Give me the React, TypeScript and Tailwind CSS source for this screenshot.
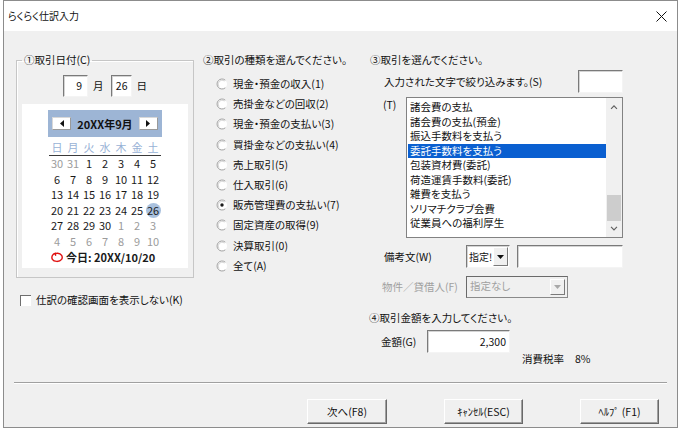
import type { ReactNode } from "react";

const TRADE_TYPES = [
  "現金・預金の収入(1)",
  "売掛金などの回収(2)",
  "現金・預金の支払い(3)",
  "買掛金などの支払い(4)",
  "売上取引(5)",
  "仕入取引(6)",
  "販売管理費の支払い(7)",
  "固定資産の取得(9)",
  "決算取引(0)",
  "全て(A)",
];
const SELECTED_TYPE = 6;

const TRADES = [
  "諸会費の支払",
  "諸会費の支払(預金)",
  "振込手数料を支払う",
  "委託手数料を支払う",
  "包装資材費(委託)",
  "荷造運賃手数料(委託)",
  "雑費を支払う",
  "ソリマチクラブ会費",
  "従業員への福利厚生",
];
const SELECTED_TRADE = 3;

const WEEKDAYS = ["日", "月", "火", "水", "木", "金", "土"];

// 6週分: 前月末 2日 + 当月 30日 + 翌月 10日
const CALENDAR_DAYS = [
  ...[30, 31].map((d) => ({ d, muted: true })),
  ...Array.from({ length: 30 }, (_, i) => ({ d: i + 1, muted: false })),
  ...Array.from({ length: 10 }, (_, i) => ({ d: i + 1, muted: true })),
];
const SELECTED_DAY = 26;

const sunken =
  "border border-t-[#7a7a7a] border-l-[#7a7a7a] border-r-[#f4f4f4] border-b-[#f4f4f4] shadow-[inset_1px_1px_0_#d4d4d4]";

function CloseIcon() {
  return (
    <svg width="11" height="11" viewBox="0 0 11 11">
      <path d="M0.5 0.5L10.5 10.5M10.5 0.5L0.5 10.5" stroke="#111" strokeWidth="1" />
    </svg>
  );
}

function RadioMark({ checked }: { checked?: boolean }) {
  return (
    <svg width="12" height="12" viewBox="0 0 12 12">
      <circle cx="6" cy="6" r="5" fill="#fff" />
      <path d="M9.3 2.2A5 5 0 1 0 9.3 9.8" fill="none" stroke="#a0a0a0" strokeWidth="1" />
      <path d="M8.6 3A4 4 0 0 0 3 8.6" fill="none" stroke="#c8c8c8" strokeWidth="0.8" />
      {checked && <circle cx="6" cy="6" r="1.7" fill="#1a1a1a" />}
    </svg>
  );
}

function TodayMark() {
  return (
    <svg width="14" height="12" viewBox="0 0 14 12">
      <path
        d="M5.5 2.2C2.2 3 1.2 6 2.4 8.4 3.8 11 9.6 11.2 11.6 8.4 13.2 6 11.4 2.4 7.6 2.2 6.2 2.1 4.6 2.8 5.6 4.2"
        fill="none"
        stroke="#e01010"
        strokeWidth="1.4"
        strokeLinecap="round"
      />
    </svg>
  );
}

function NavButton({ dir }: { dir: "prev" | "next" }) {
  return (
    <span className="flex h-[13px] w-[19px] items-center justify-center border border-[#d8d8d8] border-b-[#9a9a9a] border-r-[#9a9a9a] bg-white">
      <svg width="4" height="7" viewBox="0 0 4 7">
        {dir === "prev" ? <path d="M4 0L0 3.5L4 7Z" fill="#111" /> : <path d="M0 0L4 3.5L0 7Z" fill="#111" />}
      </svg>
    </span>
  );
}

function DropArrow({ disabled }: { disabled?: boolean }) {
  return (
    <span className="flex h-full w-[15px] shrink-0 items-center justify-center border border-white border-b-[#7a7a7a] border-r-[#7a7a7a] bg-[#f0f0f0]">
      <svg width="7" height="4" viewBox="0 0 7 4">
        <path d="M0 0H7L3.5 4Z" fill={disabled ? "#a8a8a8" : "#111"} />
      </svg>
    </span>
  );
}

function DialogButton({ width, children }: { width: string; children: ReactNode }) {
  return (
    <button
      type="button"
      className={`flex h-[25px] items-center justify-center border border-white border-b-[#696969] border-r-[#696969] bg-[#f0f0f0] shadow-[inset_-1px_-1px_0_#a0a0a0] ${width}`}
    >
      {children}
    </button>
  );
}

function DateFieldset() {
  return (
    <fieldset className="h-[225px] border border-[#c6c6c6] shadow-[inset_1px_1px_0_#fff]">
      <legend className="ml-[5px] px-[2px] leading-[14px]">①取引日付(C)</legend>

      <div className="mt-[8px] flex h-[22px] items-center justify-center">
        <span className={`flex h-[22px] w-[25px] items-center justify-end bg-white pr-[5px] ${sunken}`}>9</span>
        <span className="ml-[5px]">月</span>
        <span className={`ml-[7px] flex h-[22px] w-[21px] items-center justify-end bg-white pr-[3px] ${sunken}`}>26</span>
        <span className="ml-[5px]">日</span>
      </div>

      <div className="mx-[5px] mt-[7px] flex h-[164px] flex-col bg-white">
        <div className="mx-auto mt-[6px] flex h-[27px] w-[114px] items-center justify-between bg-[#9db5d5] px-[4px]">
          <NavButton dir="prev" />
          <span className="text-[11px] font-bold text-[#111]">20XX年9月</span>
          <NavButton dir="next" />
        </div>

        <div className="mx-auto mt-[2px] grid h-[17px] w-[112px] grid-cols-7 items-center border-b border-[#3a3a3a] text-center text-[11px] text-[#98b2d6]">
          {WEEKDAYS.map((w) => (
            <span key={w}>{w}</span>
          ))}
        </div>

        <div className="mx-auto grid w-[112px] auto-rows-[15.5px] grid-cols-7 text-center text-[11px] leading-[15.5px]">
          {CALENDAR_DAYS.map(({ d, muted }, i) => (
            <span key={i} className="flex items-center justify-center">
              {!muted && d === SELECTED_DAY ? (
                <span className="flex h-[15px] w-[15px] items-center justify-center rounded-full bg-[#a9c1de] text-[#1a1a1a]">
                  {d}
                </span>
              ) : (
                <span className={muted ? "text-[#9c9c9c]" : "text-[#1a1a1a]"}>{d}</span>
              )}
            </span>
          ))}
        </div>

        <div className="ml-[28px] flex h-[16px] items-center gap-[2px]">
          <TodayMark />
          <span className="text-[11px] font-bold text-[#1a1a1a]">今日: 20XX/10/20</span>
        </div>
      </div>
    </fieldset>
  );
}

export default function App() {
  return (
    <div className="h-[433px] w-[680px] bg-white font-['Noto_Sans_CJK_JP',sans-serif] text-[10.5px] leading-[14px] text-[#111] [font-feature-settings:'palt']">
      <div className="ml-[3px] flex h-[428px] w-[675px] flex-col border border-[#8c8c8c] bg-[#f0f0f0]">
        <div className="flex h-[30px] shrink-0 items-center justify-between bg-white pl-[4px] pr-[10px]">
          <span className="text-[10px]">らくらく仕訳入力</span>
          <CloseIcon />
        </div>

        <div className="flex h-[351px] shrink-0 pt-[22px]">
          {/* ① 日付 */}
          <div className="ml-[12px] flex w-[178px] flex-col">
            <DateFieldset />
            <div className="ml-[4px] mt-[15px] flex h-[14px] items-center">
              <span className="h-[11px] w-[11px] border-l border-t border-[#6e6e6e] bg-white" />
              <span className="ml-[5px]">仕訳の確認画面を表示しない(K)</span>
            </div>
          </div>

          {/* ② 取引の種類 */}
          <div className="ml-[9px] flex w-[162px] flex-col">
            <div className="h-[14px]">②取引の種類を選んでください。</div>
            <div className="mt-[7px] flex flex-col">
              {TRADE_TYPES.map((t, i) => (
                <div key={t} className="flex h-[20.2px] items-center">
                  <span className="ml-[13px] flex">
                    <RadioMark checked={i === SELECTED_TYPE} />
                  </span>
                  <span className="ml-[5px]">{t}</span>
                </div>
              ))}
            </div>
          </div>

          {/* ③ 取引 / ④ 金額 */}
          <div className="ml-[3px] flex w-[255px] flex-col">
            <div className="ml-[2px] h-[14px]">③取引を選んでください。</div>

            <div className="mt-[3px] flex h-[23px] items-center">
              <span className="ml-[16px]">入力された文字で絞り込みます。(S)</span>
              <span className={`ml-auto h-[23px] w-[45px] bg-white ${sunken}`} />
            </div>

            <div className="mt-[4px] flex">
              <span className="ml-[15px] pt-[1px]">(T)</span>
              <div className="ml-auto flex h-[141px] w-[217px] border border-[#828282] bg-white">
                <div className="flex flex-1 flex-col pl-[1px] pt-[2px]">
                  {TRADES.map((t, i) => (
                    <div
                      key={t}
                      className={`flex h-[14.5px] items-center pl-[2px] ${
                        i === SELECTED_TRADE ? "bg-[#0a5fd0] text-white" : ""
                      }`}
                    >
                      {t}
                    </div>
                  ))}
                </div>
                <div className="flex w-[16px] flex-col items-center bg-[#f0f0f0]">
                  <svg width="8" height="16" viewBox="0 0 8 16" className="mt-[1px]">
                    <path d="M1 10L4 7L7 10" fill="none" stroke="#606060" strokeWidth="1.2" />
                  </svg>
                  <span className="mt-[80px] h-[27px] w-[14px] bg-[#cdcdcd]" />
                  <svg width="8" height="16" viewBox="0 0 8 16" className="mt-auto">
                    <path d="M1 6L4 9L7 6" fill="none" stroke="#606060" strokeWidth="1.2" />
                  </svg>
                </div>
              </div>
            </div>

            <div className="mt-[7px] flex h-[23px] items-center">
              <span className="ml-[16px] w-[82px]">備考文(W)</span>
              <span className={`flex h-[23px] w-[44px] items-stretch bg-white p-[1px] ${sunken}`}>
                <span className="flex min-w-0 flex-1 items-center whitespace-nowrap pl-[1px] text-[10px] text-[#111]">指定!</span>
                <DropArrow />
              </span>
              <span className={`ml-[7px] h-[23px] w-[106px] bg-white ${sunken}`} />
            </div>

            <div className="mt-[8px] flex h-[22px] items-center">
              <span className="ml-[14px] w-[84px] text-[#a0a0a0]">物件／貸借人(F)</span>
              <span className="flex h-[22px] w-[102px] items-stretch border border-[#8a8a8a] border-l-[#6a6a6a] border-t-[#6a6a6a] bg-[#f0f0f0] p-[2px]">
                <span className="flex-1 pl-[1px] text-[#a0a0a0]">指定なし</span>
                <DropArrow disabled />
              </span>
            </div>

            <div className="ml-[1px] mt-[13px] h-[14px]">④取引金額を入力してください。</div>

            <div className="mt-[5px] flex h-[23px] items-center">
              <span className="ml-[13px] w-[46px]">金額(G)</span>
              <span className={`flex h-[23px] w-[83px] items-center justify-end bg-white pr-[3px] ${sunken}`}>2,300</span>
            </div>

            <div className="ml-[154px] flex leading-[12px]">
              <span>消費税率</span>
              <span className="ml-[11px]">8%</span>
            </div>
          </div>
        </div>

        <div className="mx-[10px] border-b border-t border-b-white border-t-[#a0a0a0]" />

        <div className="mt-[15px] flex justify-end gap-[57px] pr-[18px]">
          <DialogButton width="w-[80px]">次へ(F8)</DialogButton>
          <DialogButton width="w-[79px]">ｷｬﾝｾﾙ(ESC)</DialogButton>
          <DialogButton width="w-[79px]">ﾍﾙﾌﾟ (F1)</DialogButton>
        </div>
      </div>
    </div>
  );
}
